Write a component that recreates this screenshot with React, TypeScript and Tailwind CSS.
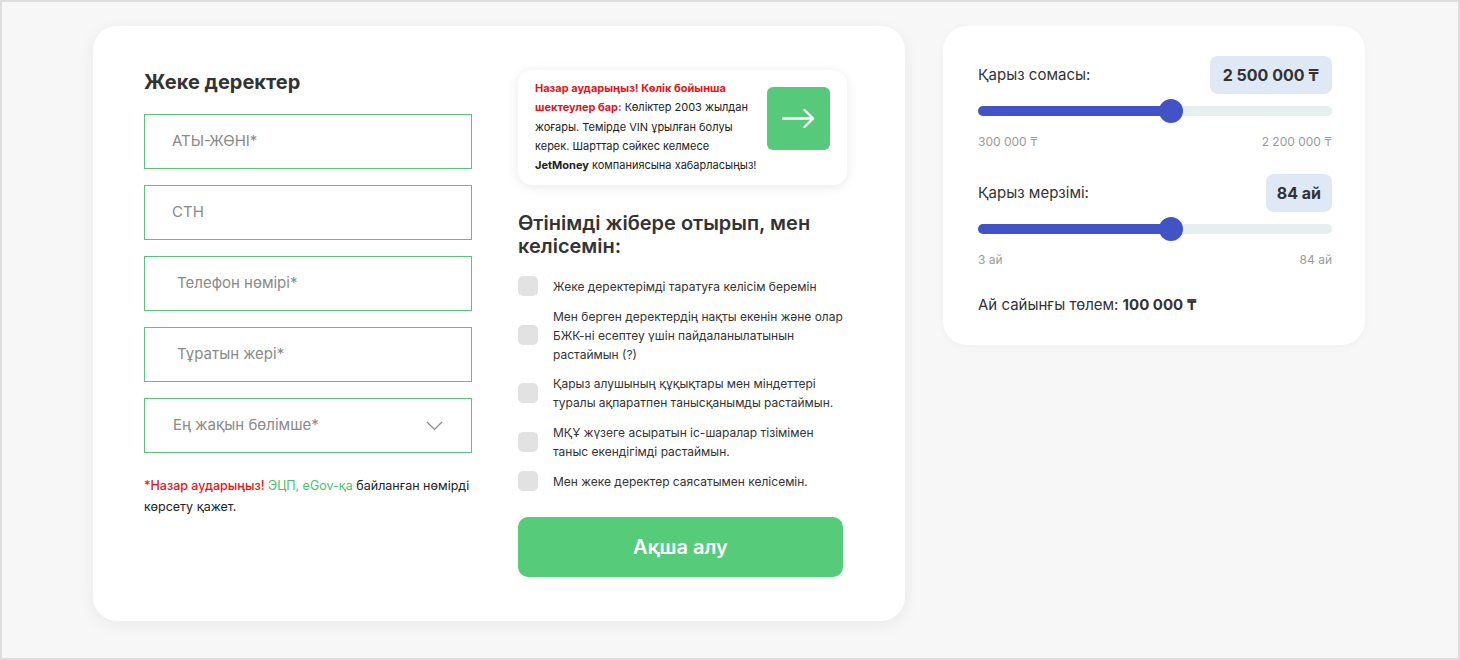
import React from 'react';

const font = { fontFamily: 'Inter, "Noto Sans", sans-serif' };

function Field({ label, pad, chevron }: { label: string; pad: string; chevron?: boolean }) {
  return (
    <div className={`h-[55px] border border-[#5ec27f] flex items-center justify-between ${pad} pr-[28px]`}>
      <span className="text-[15px] text-[#8a8a8a]">{label}</span>
      {chevron && (
        <svg width="17" height="10" viewBox="0 0 17 10" fill="none">
          <polyline points="1,1 8.5,8.5 16,1" stroke="#8a8a8a" strokeWidth="1.2" />
        </svg>
      )}
    </div>
  );
}

function Check({ children }: { children: React.ReactNode }) {
  return (
    <div className="flex items-center gap-[15px]">
      <div className="w-[20px] h-[20px] shrink-0 rounded-[5px] bg-[#e2e2e2]" />
      <p className="text-[12px] leading-[19px] text-[#333]">{children}</p>
    </div>
  );
}

function Slider({ fill }: { fill: string }) {
  return (
    <div className="relative h-[24px] flex items-center mt-[5px]">
      <div className="w-full h-[10px] rounded-full bg-[#e4efee]">
        <div className={`h-full rounded-full bg-[#4253c6] ${fill}`} />
      </div>
      <div className="absolute left-[181px] top-0 w-[24px] h-[24px] rounded-full bg-[#4253c6]" />
    </div>
  );
}

export default function App() {
  return (
    <div className="w-full h-[660px] bg-[#f7f7f7] border-2 border-[#dedede] text-[#333]" style={font}>
      <div className="flex items-start pt-[24px] pl-[91px]">
        {/* Left card */}
        <div className="w-[812px] h-[595px] bg-white rounded-[24px] shadow-[0_4px_18px_rgba(0,0,0,0.06)] pt-[44px] px-[51px] flex gap-[46px]">
          <div className="w-[328px]">
            <h2 className="text-[20px] leading-[24px] font-bold text-[#333] mb-[20px]">Жеке деректер</h2>
            <div className="flex flex-col gap-4">
              <Field label="АТЫ-ЖӨНІ*" pad="pl-[27px]" />
              <Field label="СТН" pad="pl-[27px]" />
              <Field label="Телефон нөмірі*" pad="pl-[32px]" />
              <Field label="Тұратын жері*" pad="pl-[32px]" />
              <Field label="Ең жақын бөлімше*" pad="pl-[28px]" chevron />
            </div>
            <p className="mt-[22px] text-[12.5px] leading-[21px] text-[#222]">
              <span className="text-[#e3151c] font-medium">*Назар аударыңыз!</span>{' '}
              <span className="text-[#4cbf6e]">ЭЦП, eGov-қа</span> байланған нөмірді көрсету қажет.
            </p>
          </div>

          <div className="w-[329px]">
            <div className="h-[115px] rounded-[14px] bg-white shadow-[0_2px_12px_rgba(0,0,0,0.09)] flex items-start justify-between pl-[17px] pr-[17px]">
              <p className="pt-[9px] w-[228px] text-[11px] leading-[19.3px] text-[#222]">
                <b className="text-[#e3151c]">Назар аударыңыз! Көлік бойынша шектеулер бар:</b> Көліктер 2003 жылдан
                жоғары. Темірде VIN ұрылған болуы керек. Шарттар сәйкес келмесе <b>JetMoney</b> компаниясына
                хабарласыңыз!
              </p>
              <button className="mt-[17px] w-[63px] h-[63px] rounded-[6px] bg-[#56c97a] flex items-center justify-center">
                <svg width="33" height="19" viewBox="0 0 33 19" fill="none">
                  <path d="M1 9.5h30M22.5 1l8.5 8.5-8.5 8.5" stroke="white" strokeWidth="2.4" strokeLinecap="round" strokeLinejoin="round" />
                </svg>
              </button>
            </div>

            <h3 className="mt-[27px] text-[20px] leading-[23px] font-semibold text-[#333]">
              Өтінімді жібере отырып, мен келісемін:
            </h3>

            <div className="mt-[18px] flex flex-col gap-[10.5px]">
              <Check>Жеке деректерімді таратуға келісім беремін</Check>
              <Check>Мен берген деректердің нақты екенін және олар БЖК-ні есептеу үшін пайдаланылатынын растаймын (?)</Check>
              <Check>Қарыз алушының құқықтары мен міндеттері туралы ақпаратпен танысқанымды растаймын.</Check>
              <Check>МҚҰ жүзеге асыратын іс-шаралар тізімімен таныс екендігімді растаймын.</Check>
              <Check>Мен жеке деректер саясатымен келісемін.</Check>
            </div>

            <button className="mt-[26px] w-[325px] h-[60px] rounded-[10px] bg-[#56cc7b] text-white text-[20px] font-semibold">
              Ақша алу
            </button>
          </div>
        </div>

        {/* Right card */}
        <div className="ml-[38px] w-[422px] bg-white rounded-[24px] shadow-[0_2px_10px_rgba(0,0,0,0.03)] pt-[30px] pb-[30px] pl-[35px] pr-[33px]">
          <div className="flex items-center justify-between h-[38px]">
            <span className="text-[15px]">Қарыз сомасы:</span>
            <span className="h-[38px] px-[13px] rounded-[8px] bg-[#dfe8f5] flex items-center text-[16px] font-bold">2 500 000 ₸</span>
          </div>
          <Slider fill="w-[193px]" />
          <div className="mt-[11px] flex justify-between text-[12px] leading-[16px] text-[#9a9a9a]">
            <span>300 000 ₸</span>
            <span>2 200 000 ₸</span>
          </div>

          <div className="mt-[24px] flex items-center justify-between h-[38px]">
            <span className="text-[15px]">Қарыз мерзімі:</span>
            <span className="h-[38px] px-[11px] rounded-[8px] bg-[#dfe8f5] flex items-center text-[16px] font-bold">84 ай</span>
          </div>
          <Slider fill="w-[193px]" />
          <div className="mt-[11px] flex justify-between text-[12px] leading-[16px] text-[#9a9a9a]">
            <span>3 ай</span>
            <span>84 ай</span>
          </div>

          <p className="mt-[27px] text-[15px] leading-[20px]">
            Ай сайынғы төлем: <b>100 000 ₸</b>
          </p>
        </div>
      </div>
    </div>
  );
}
